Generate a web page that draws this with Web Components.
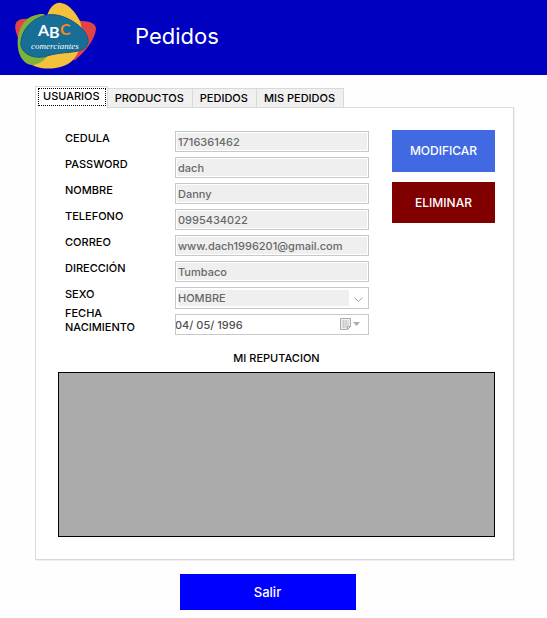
<!DOCTYPE html>
<html lang="es">
<head>
<meta charset="utf-8">
<meta name="viewport" content="width=device-width, initial-scale=1">
<title>Pedidos</title>
<style>
body { margin: 0; background: #fefefe; color: #000; font: 500 11px/14px Inter, "Open Sans", sans-serif; }
</style>
</head>
<body>
<orders-page></orders-page>
<script>
function define(name, html, setup) {
  const template = document.createElement('template');
  template.innerHTML = '<style>*{box-sizing:border-box}button,input,select{font:inherit;margin:0;border-radius:0}</style>' + html;
  customElements.define(name, class extends HTMLElement {
    constructor() {
      super();
      this.attachShadow({ mode: 'open' }).append(template.content.cloneNode(true));
    }
    connectedCallback() { if (setup) setup(this, this.shadowRoot); }
  });
}

define('brand-logo', `
<style>:host{display:block;width:82px;height:68px}svg{display:block}</style>
<svg width="82" height="68" viewBox="15 2 82 68" role="img" aria-label="ABC comerciantes">
  <path fill="#e24345" d="M23 19C14 20 14 27 17 35C20 45 24 52 34 55L75 60C84 53 95 40 96 29C96 24 91 21 81 21L57 17Z"/>
  <path fill="#f5c13d" d="M47 16C50 7 55 2 61 3C69 4 76 13 80 21C84 34 82 50 73 60C67 67 50 71 37 67C28 64 25 60 31 53Z"/>
  <path fill="#7fb239" d="M43 14C29 14 20 23 18 37C16 52 22 65 33 65C40 64 46 59 49 54L53 18Z"/>
  <path fill="#176e96" stroke="#125c83" stroke-width="1" d="M47 15C57 13 69 18 78 25C87 32 91 41 86 47C80 54 62 51 47 56C34 60 23 54 21 46C20 34 28 19 47 15Z"/>
  <g font-family="Lato" font-weight="700" font-size="16">
    <text x="38" y="36" fill="#fff">A</text>
    <text x="49" y="38" fill="#fff">B</text>
    <text x="60" y="35" fill="#f28a20">C</text>
  </g>
  <text x="31" y="49" fill="#fff" font-family="Liberation Serif" font-style="italic" font-weight="400" font-size="9">comerciantes</text>
</svg>`);

define('page-header', `
<style>
:host{display:flex;align-items:center;gap:38px;min-height:75px;padding:0 15px 3px;background:#0000c0;color:#fff}
h1{margin:0;font-size:22px;line-height:30px;font-weight:400}
</style>
<brand-logo></brand-logo><h1><slot></slot></h1>`);

define('tab-bar', `
<style>
:host{display:block}
div{display:flex;align-items:flex-end;margin-bottom:-1px;position:relative}
button{height:20px;padding:0 8px 0 7px;border:1px solid #d9d9d9;border-left:0;background:#f0f0f0;color:#000;white-space:nowrap}
button[aria-selected=true]{height:22px;padding:1px 1px 2px 2px;border-left:1px solid #d9d9d9;border-bottom:0;background:#fff}
button[aria-selected=true] span{display:block;height:18px;padding:0 5px 0 4px;border:1px dotted #000;line-height:15px}
</style>
<div role="tablist">
<button role="tab" aria-selected="true"><span>USUARIOS</span></button>
<button role="tab" aria-selected="false">PRODUCTOS</button>
<button role="tab" aria-selected="false">PEDIDOS</button>
<button role="tab" aria-selected="false">MIS PEDIDOS</button>
</div>`);

define('form-field', `
<style>
:host{display:grid;grid-template-columns:110px minmax(0,1fr);align-items:start}
.box{height:21px;padding:1px;border:1px solid #c8c8c8;background:#fff}
input{display:block;width:100%;height:100%;min-width:0;padding:0 1px;border:0;background:#efefef;color:#686868;outline-offset:1px}
</style>
<label for="field"></label><div class="box"><input id="field" type="text" readonly></div>`,
(host, root) => {
  root.querySelector('label').textContent = host.getAttribute('label');
  root.querySelector('input').value = host.getAttribute('value');
});

define('choice-field', `
<style>
:host{display:grid;grid-template-columns:110px minmax(0,1fr);align-items:start}
.box{display:grid;grid-template-columns:1fr 18px;height:22px;padding:2px 1px 2px 2px;border:1px solid #c8c8c8;background:#fff}
select{grid-area:1/1/2/3;appearance:none;width:100%;height:16px;padding:0;border:0;background:linear-gradient(#efefef,#efefef) left/calc(100% - 18px) 100% no-repeat;color:#686868}
svg{grid-area:1/2;place-self:center;margin-top:3px;pointer-events:none}
</style>
<label for="choice">SEXO</label>
<div class="box"><select id="choice"><option>HOMBRE</option><option>MUJER</option></select>
<svg width="9" height="6" fill="none" stroke="#a8a8a8"><path d="M.5 .5L4.500 4.500L8.500 .5"/></svg></div>`);

define('date-field', `
<style>
:host{display:grid;grid-template-columns:110px minmax(0,1fr);align-items:start}
label{margin-top:-8px}
.box{display:flex;align-items:center;height:21px;border:1px solid #c8c8c8;background:#fff}
input{flex:1;min-width:0;height:19px;padding:0;border:0;background:transparent;color:#505050;text-indent:-1px}
button{display:flex;width:30px;height:19px;padding:2px 0 0 1px;border:0;background:none}
</style>
<label for="date">FECHA<br>NACIMIENTO</label>
<div class="box"><input id="date" type="text" value="04/ 05/ 1996">
<button aria-label="Abrir calendario"><svg width="22" height="14" viewBox="0 0 22 14">
<path d="M1.500 1.500H11.500V9.500L8.500 12.500H1.500Z" fill="#f0f0f0" stroke="#aaa"/>
<path d="M3 4H10M3 6H10M3 8H10M3 10H8M4.500 3V11M7 3V11" stroke="#ccc" fill="none"/>
<path d="M8.500 12.500V9.500H11.500" stroke="#aaa" fill="none"/>
<path d="M14 5H21L17.500 9Z" fill="#aaa"/></svg></button></div>`);

define('action-button', `
<style>
:host{display:block}
button{display:block;width:100%;height:var(--height,42px);padding:0;border:0;background:var(--fill);color:#fff;font-size:var(--size,12px)}
</style><button type="button"><slot></slot></button>`);

define('user-panel', `
<style>
:host{display:block;padding:23px 18px 22px 22px;border:1px solid #d9d9d9;background:#fff;box-shadow:1px 1px 0 #f0f0f0}
.top{display:grid;grid-template-columns:minmax(0,1fr) 103px;gap:23px;padding-left:7px}
.fields{display:grid;grid-template-columns:minmax(0,1fr);gap:5px}
.actions{display:grid;gap:10px;align-content:start;margin-top:-1px}
h2{margin:16px 0 7px;font-size:11px;line-height:14px;font-weight:500;text-align:center}
.reputation{height:165px;border:1px solid #000;background:#ababab}
</style>
<div class="top">
<div class="fields">
<form-field label="CEDULA" value="1716361462"></form-field>
<form-field label="PASSWORD" value="dach"></form-field>
<form-field label="NOMBRE" value="Danny"></form-field>
<form-field label="TELEFONO" value="0995434022"></form-field>
<form-field label="CORREO" value="www.dach1996201@gmail.com"></form-field>
<form-field label="DIRECCIÓN" value="Tumbaco"></form-field>
<choice-field></choice-field>
<date-field></date-field>
</div>
<div class="actions">
<action-button style="--fill:#4169e1">MODIFICAR</action-button>
<action-button style="--fill:#800000;--height:41px">ELIMINAR</action-button>
</div>
</div>
<h2>MI REPUTACION</h2>
<div class="reputation" role="region" aria-label="Mi reputacion"></div>`);

define('orders-page', `
<style>
:host{display:block}
main{padding:11px 33px 8px 35px}
footer{display:flex;justify-content:center;padding:14px 14px 0 0}
footer action-button{width:176px}
</style>
<page-header>Pedidos</page-header>
<main>
<tab-bar></tab-bar>
<user-panel></user-panel>
<footer><action-button style="--fill:#0000ff;--height:36px;--size:13px">Salir</action-button></footer>
</main>`);
</script>
</body>
</html>
